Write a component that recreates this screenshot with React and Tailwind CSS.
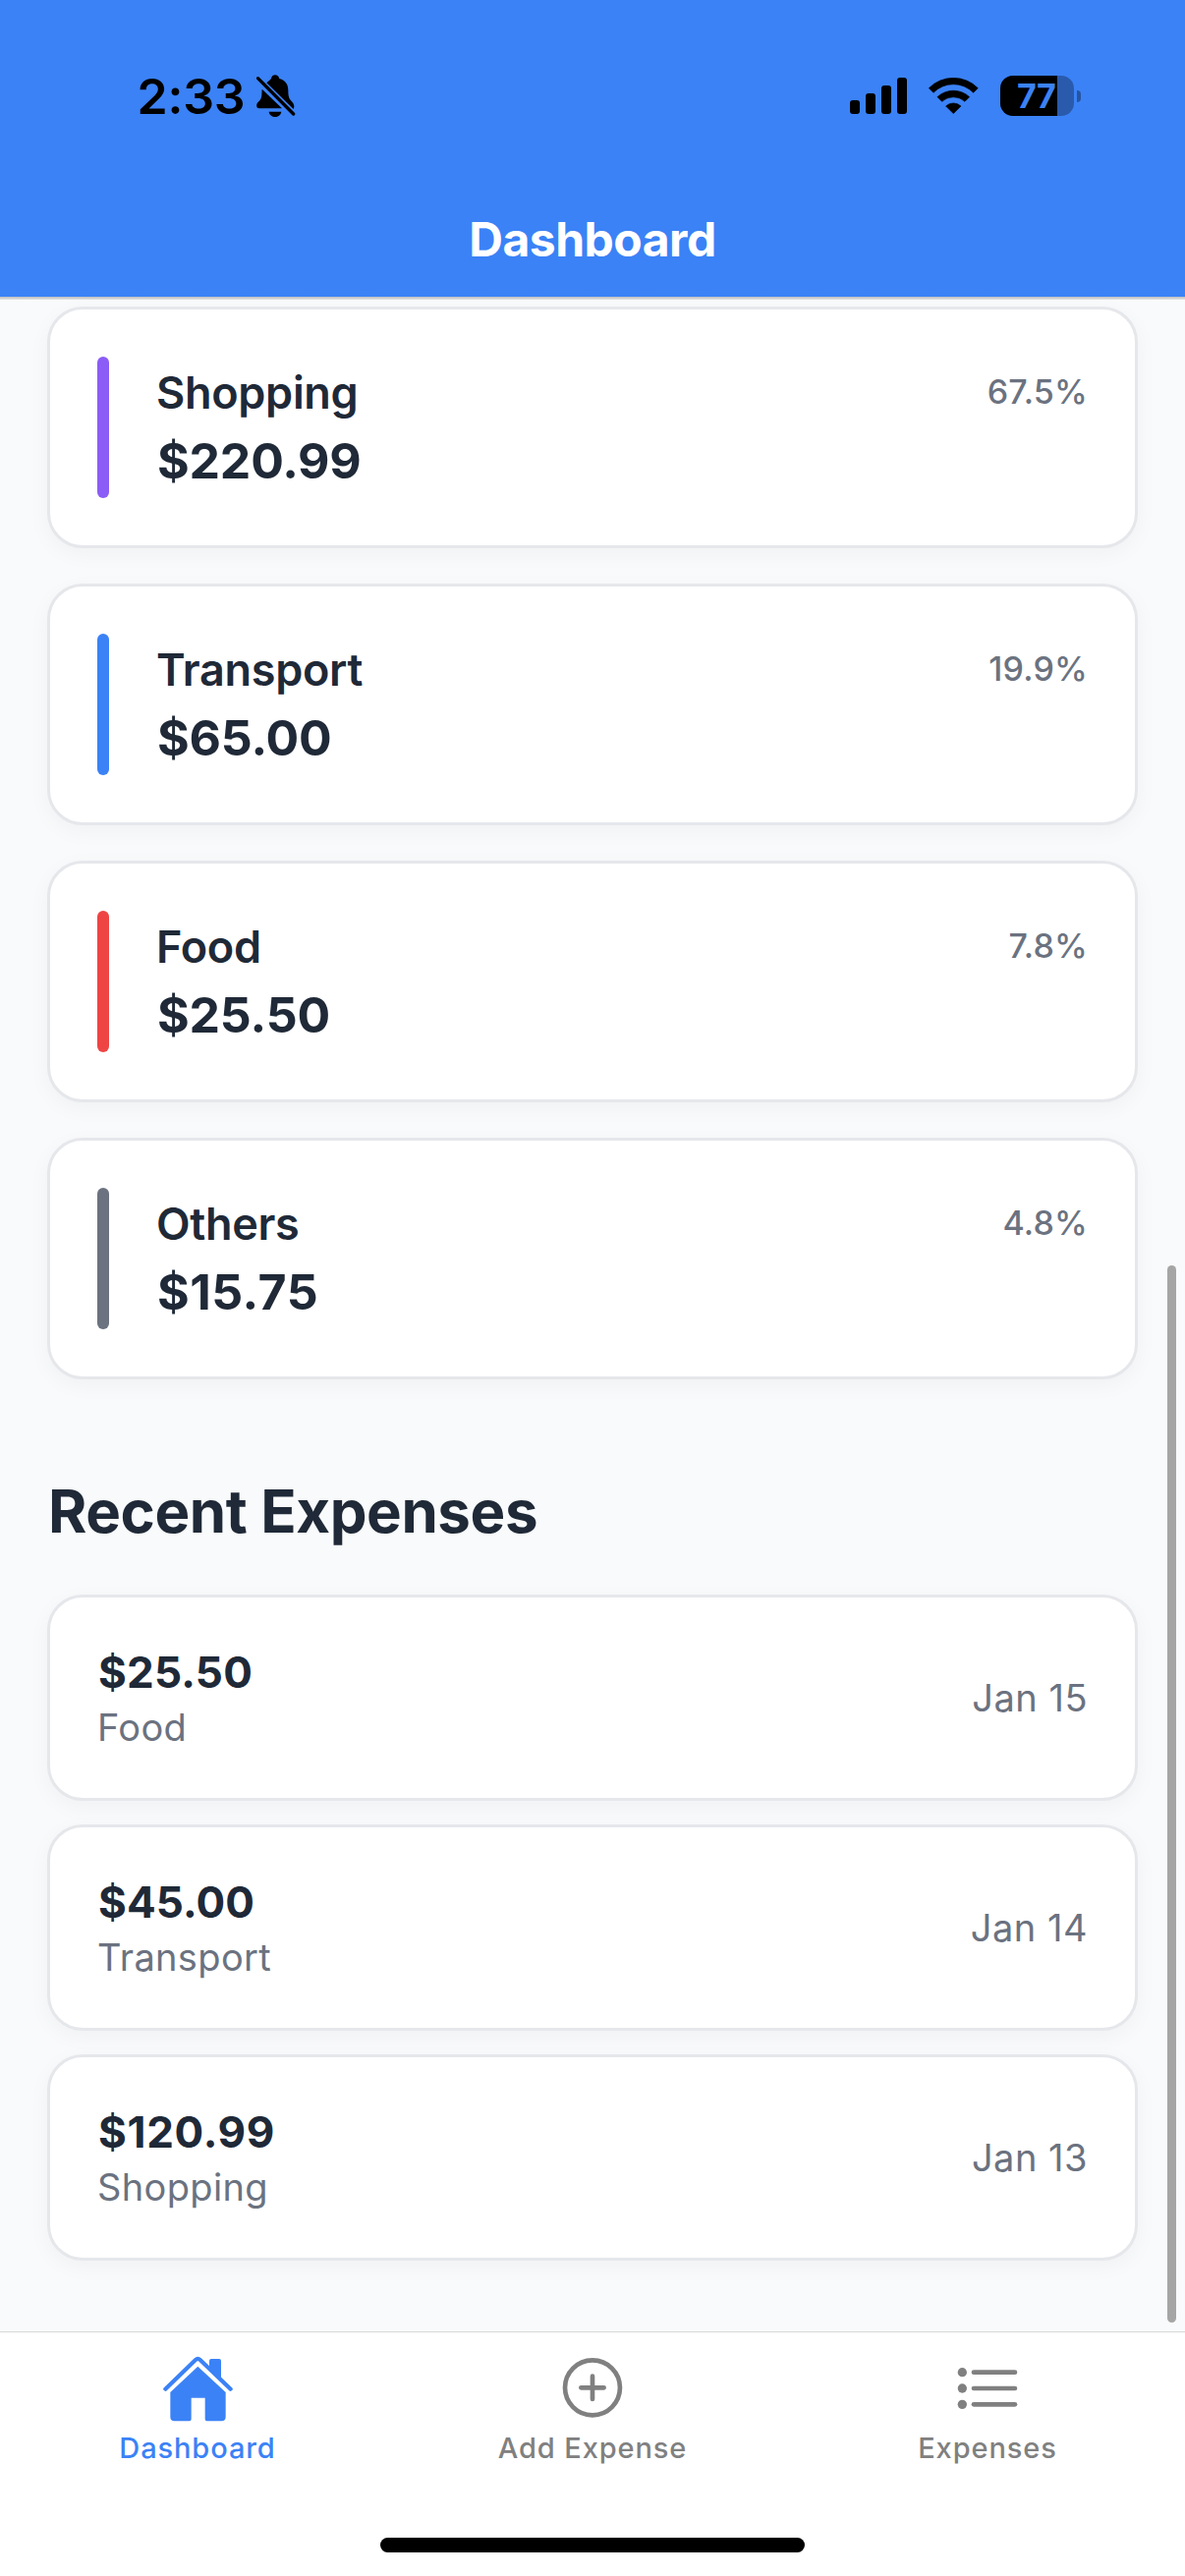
import React from "react";

const categories = [
  { name: "Shopping", amount: "$220.99", percent: "67.5%", bar: "bg-[#8b5cf6]", tracking: "tracking-[-0.2px]" },
  { name: "Transport", amount: "$65.00", percent: "19.9%", bar: "bg-[#3b82f6]", tracking: "tracking-[-0.2px]" },
  { name: "Food", amount: "$25.50", percent: "7.8%", bar: "bg-[#ef4444]", tracking: "tracking-[-0.2px]" },
  { name: "Others", amount: "$15.75", percent: "4.8%", bar: "bg-[#6b7280]", tracking: "tracking-[0.5px]" },
];

const expenses = [
  { amount: "$25.50", category: "Food", date: "Jan 15", tracking: "tracking-[0.2px]" },
  { amount: "$45.00", category: "Transport", date: "Jan 14", tracking: "tracking-[0.1px]" },
  { amount: "$120.99", category: "Shopping", date: "Jan 13", tracking: "tracking-[0.7px]" },
];

function BellSlashIcon() {
  return (
    <svg viewBox="426 50 118 130" className="h-[43.3px] w-[39.3px]" fill="#000">
      <path d="M457 75C463 69 468 66 471 62C472 54 478 51 483 51S494 54 496 62C515 68 523 80 523 98C523 118 526 124 535 133C540 138 541 142 541 149L539 155Z" />
      <path d="M443 94L504 153H434C426 153 425 144 428 138C432 131 441 128 442 112Z" />
      <path d="M464 163H502C500 174 492 179 483 179S466 174 464 163Z" />
      <path d="M430.500 61L539 170" stroke="#000" strokeWidth="10" strokeLinecap="round" />
    </svg>
  );
}

function SignalIcon() {
  return (
    <div className="flex h-[37px] items-end gap-[6px]">
      <span className="h-[14px] w-[10px] rounded-[3px] bg-black" />
      <span className="h-[21px] w-[10px] rounded-[3px] bg-black" />
      <span className="h-[29px] w-[10px] rounded-[3px] bg-black" />
      <span className="h-[37px] w-[10px] rounded-[3px] bg-black" />
    </div>
  );
}

function WifiIcon() {
  return (
    <svg viewBox="0 0 152 112" className="h-[37.300px] w-[50.600px]" fill="#000" stroke="#000" strokeWidth="2" strokeLinejoin="round">
      <path d="M1 32A106 106 0 0 1 151 32L137 46A85 85 0 0 0 15 46Z" />
      <path d="M27 59A72 72 0 0 1 125 59L111 73A52 52 0 0 0 41 73Z" />
      <path d="M53 87A34 34 0 0 1 99 87L76 110Z" />
    </svg>
  );
}

function BatteryIcon() {
  return (
    <div className="flex items-center gap-[3px]">
      <div className="flex h-[41px] w-[75px] overflow-hidden rounded-[13px] bg-black/30">
        <div className="flex h-full w-[58px] items-center justify-end bg-black pr-[1.500px] text-[34px] leading-[40px] font-bold tracking-[-0.3px] text-[#3b82f6]">
          77
        </div>
      </div>
      <span className="h-[12px] w-[4px] rounded-r-full bg-black/35" />
    </div>
  );
}

function HouseIcon() {
  return (
    <svg viewBox="498 111 213 201" className="h-[67px] w-[71px]" fill="#3b82f6">
      <path d="M505 212L597 123Q604 116.500 611 123L704 212" fill="none" stroke="#3b82f6" strokeWidth="12.500" strokeLinecap="round" />
      <path d="M639 146V126Q639 120 645 120H669Q675 120 675 126V181Z" />
      <path d="M604 143L689 222V297Q689 310 676 310H632Q626 310 626 304V239H584V304Q584 310 578 310H533Q520 310 520 297V222Z" />
    </svg>
  );
}

function PlusCircleIcon() {
  return (
    <svg viewBox="0 0 184 184" className="h-[61.300px] w-[61.300px]" fill="none" stroke="#808080" strokeWidth="14" strokeLinecap="round">
      <circle cx="93" cy="91" r="84" />
      <path d="M93 56V126M58 91H128" />
    </svg>
  );
}

function ListIcon() {
  return (
    <svg viewBox="0 0 184 128" className="h-[42.700px] w-[61.300px]" fill="#808080" stroke="#808080">
      {[14, 63, 112].map((y) => (
        <g key={y}>
          <circle cx="16" cy={y} r="14" stroke="none" />
          <path d={`M51 ${y}H177`} strokeWidth="14" strokeLinecap="round" />
        </g>
      ))}
    </svg>
  );
}

function Header() {
  return (
    <header className="h-[302px] bg-[#3b82f6]">
      <div className="flex h-[195px] items-center justify-between pr-[106px] pl-[139.500px]">
        <div className="flex items-center gap-[12px]">
          <span className="text-[50px] leading-[60px] font-semibold tracking-[-0.2px] text-black">2:33</span>
          <BellSlashIcon />
        </div>
        <div className="flex items-center gap-[22px]">
          <SignalIcon />
          <WifiIcon />
          <BatteryIcon />
        </div>
      </div>
      <h1 className="pt-px text-center text-[48px] leading-[95px] font-bold tracking-[-0.5px] text-white">Dashboard</h1>
    </header>
  );
}

function CategoryCard({ item }) {
  return (
    <article className="flex h-[246px] rounded-[36px] border-[3px] border-[#e5e7eb] bg-white p-[48px] shadow-[0_6px_22px_rgba(0,0,0,0.04)]">
      <span className={`h-[144px] w-[12px] rounded-[6px] ${item.bar}`} />
      <div className="ml-[48px] flex-1 pt-[10px] text-[#1f2937]">
        <p className="text-[45px] leading-[54px] font-semibold tracking-[-0.3px]">{item.name}</p>
        <p className={`mt-[12px] pl-px text-[50px] leading-[60px] font-bold ${item.tracking}`}>{item.amount}</p>
      </div>
      <span className="mt-[14px] text-[34px] leading-[44px] font-medium tracking-[0.2px] text-[#6b7280]">{item.percent}</span>
    </article>
  );
}

function ExpenseCard({ item }) {
  return (
    <article className="flex h-[210px] items-center justify-between rounded-[36px] border-[3px] border-[#e5e7eb] bg-white px-[48px] shadow-[0_6px_22px_rgba(0,0,0,0.04)]">
      <div>
        <p className={`pl-px text-[44px] leading-[54px] font-bold text-[#1f2937] ${item.tracking}`}>{item.amount}</p>
        <p className="mt-[6px] text-[38px] leading-[46px] tracking-[0.35px] text-[#6b7280]">{item.category}</p>
      </div>
      <span className="text-[38px] leading-[46px] tracking-[0.5px] text-[#6b7280]">{item.date}</span>
    </article>
  );
}

function Tab({ label, icon, active }) {
  return (
    <div className={`flex flex-col items-center pt-[21px] ${active ? "text-[#3b82f6]" : "text-[#808080]"}`}>
      <div className="flex h-[72px] items-center">{icon}</div>
      <span className="mt-[7px] text-[29px] leading-[36px] font-medium tracking-[0.9px]">{label}</span>
    </div>
  );
}

export default function App() {
  return (
    <div className="flex h-[2622px] w-[1206px] flex-col overflow-hidden bg-[#f9fafb] font-['Inter',sans-serif]">
      <Header />
      <div className="h-[3px] bg-linear-to-b from-[#b9bcc2] to-[#e6e6e3]" />
      <main className="relative h-[2068px] px-[48px] pt-[7px]">
        <section className="flex flex-col gap-[36px]">
          {categories.map((item) => (
            <CategoryCard key={item.name} item={item} />
          ))}
        </section>
        <h2 className="mt-[98px] mb-[49px] pl-px text-[60px] leading-[72px] font-bold tracking-[-0.4px] text-[#1f2937]">
          Recent Expenses
        </h2>
        <section className="flex flex-col gap-[24px]">
          {expenses.map((item) => (
            <ExpenseCard key={item.date} item={item} />
          ))}
        </section>
        <span className="absolute right-[9px] bottom-[9px] h-[1076px] w-[9px] rounded-full bg-[#a5a5a5]" />
      </main>
      <nav className="flex h-[249px] flex-col justify-between border-t border-[#d8d8d8] bg-white pb-[24px]">
        <div className="grid grid-cols-3">
          <Tab label="Dashboard" icon={<HouseIcon />} active />
          <Tab label="Add Expense" icon={<PlusCircleIcon />} />
          <Tab label="Expenses" icon={<ListIcon />} />
        </div>
        <span className="h-[15px] w-[432px] self-center rounded-full bg-black" />
      </nav>
    </div>
  );
}
